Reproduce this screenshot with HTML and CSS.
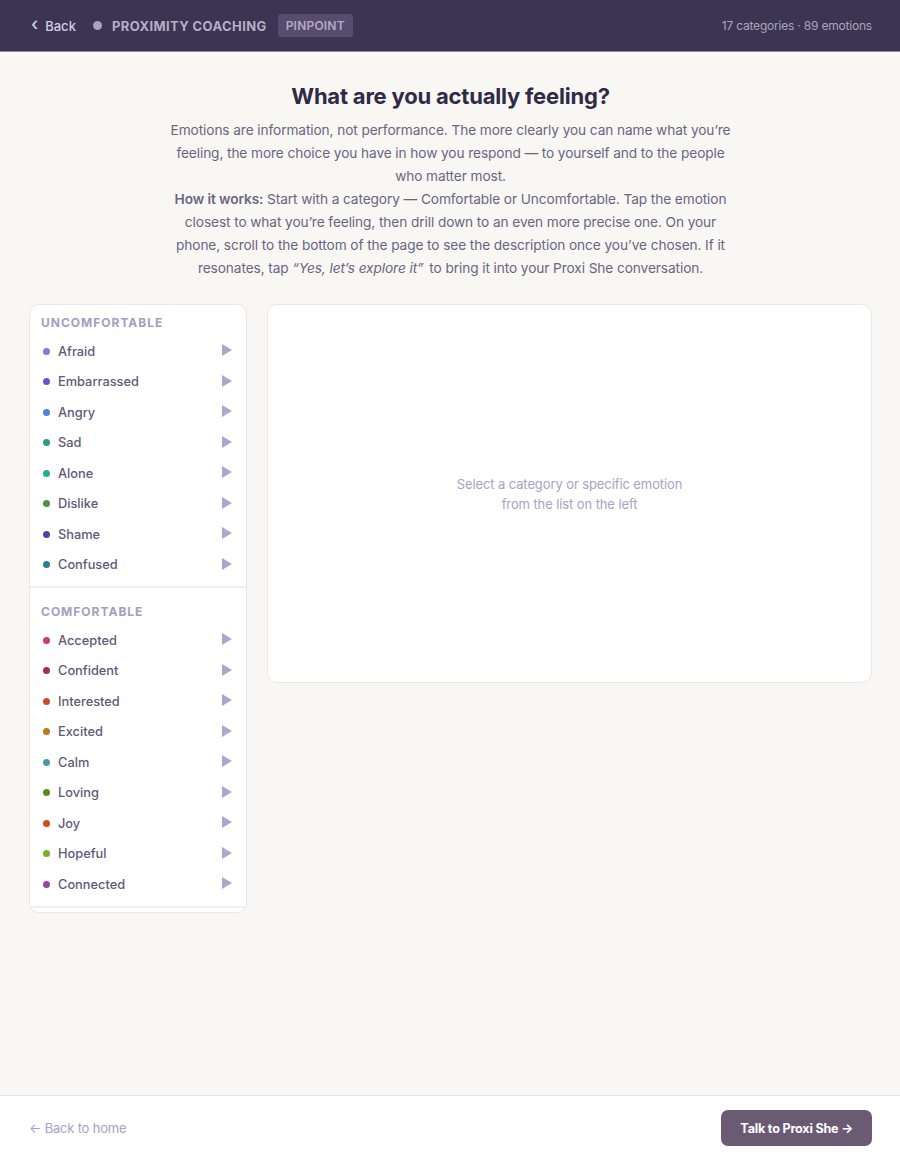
FILE: index.html
```html
<!DOCTYPE html>
<html lang="en">
<head>
    <meta charset="UTF-8">
    <meta name="viewport" content="width=device-width, initial-scale=1.0">
    <title>Pinpoint · Proximity Coaching</title>
    <link rel="stylesheet" href="styles.css">
</head>
<body>

    <header class="topbar">
        <div class="topbar-left">
            <a class="back" href="#"><span class="chev">&#8249;</span> Back</a>
            <span class="brand-dot"></span>
            <span class="brand">PROXIMITY COACHING</span>
            <span class="badge">PINPOINT</span>
        </div>
        <div class="stats">17 categories · 89 emotions</div>
    </header>

    <main class="main">
        <h1>What are you actually feeling?</h1>
        <p class="intro">Emotions are information, not performance. The more clearly you can name what you’re feeling, the more choice you have in how you respond — to yourself and to the people who matter most.</p>
        <p class="intro"><strong>How it works:</strong> Start with a category — Comfortable or Uncomfortable. Tap the emotion closest to what you’re feeling, then drill down to an even more precise one. On your phone, scroll to the bottom of the page to see the description once you’ve chosen. If it resonates, tap <em>“Yes, let’s explore it”</em> to bring it into your Proxi She conversation.</p>

        <div class="picker">
            <!-- lista de emociones -->
            <nav class="list">
                <div class="group">
                    <div class="group-title">UNCOMFORTABLE</div>
                    <div class="item"><span class="dot" style="background:#8c74e0"></span>Afraid<span class="arrow"></span></div>
                    <div class="item"><span class="dot" style="background:#6c52d4"></span>Embarrassed<span class="arrow"></span></div>
                    <div class="item"><span class="dot" style="background:#4a84dc"></span>Angry<span class="arrow"></span></div>
                    <div class="item"><span class="dot" style="background:#2e9a82"></span>Sad<span class="arrow"></span></div>
                    <div class="item"><span class="dot" style="background:#1fb092"></span>Alone<span class="arrow"></span></div>
                    <div class="item"><span class="dot" style="background:#4c9440"></span>Dislike<span class="arrow"></span></div>
                    <div class="item"><span class="dot" style="background:#4a46aa"></span>Shame<span class="arrow"></span></div>
                    <div class="item"><span class="dot" style="background:#26809c"></span>Confused<span class="arrow"></span></div>
                </div>
                <div class="group">
                    <div class="group-title">COMFORTABLE</div>
                    <div class="item"><span class="dot" style="background:#cc3a7a"></span>Accepted<span class="arrow"></span></div>
                    <div class="item"><span class="dot" style="background:#a42c5a"></span>Confident<span class="arrow"></span></div>
                    <div class="item"><span class="dot" style="background:#c84c30"></span>Interested<span class="arrow"></span></div>
                    <div class="item"><span class="dot" style="background:#bc7a1e"></span>Excited<span class="arrow"></span></div>
                    <div class="item"><span class="dot" style="background:#4a98a6"></span>Calm<span class="arrow"></span></div>
                    <div class="item"><span class="dot" style="background:#5e8a22"></span>Loving<span class="arrow"></span></div>
                    <div class="item"><span class="dot" style="background:#d8481a"></span>Joy<span class="arrow"></span></div>
                    <div class="item"><span class="dot" style="background:#78ae2a"></span>Hopeful<span class="arrow"></span></div>
                    <div class="item"><span class="dot" style="background:#9a44a8"></span>Connected<span class="arrow"></span></div>
                </div>
            </nav>

            <section class="detail">
                <p class="empty">Select a category or specific emotion<br>from the list on the left</p>
            </section>
        </div>
    </main>

    <footer class="footer">
        <a class="home" href="#">← Back to home</a>
        <button class="talk">Talk to Proxi She →</button>
    </footer>

</body>
</html>
```

FILE: styles.css
```css
* { box-sizing: border-box; }
body {
    margin: 0;
    min-height: 100vh;
    display: flex;
    flex-direction: column;
    font-family: Inter, "Noto Sans", sans-serif;
    background-color: #f8f7f4;
    color: #5e5878;
}
a { text-decoration: none; }

/* barra superior */
.topbar {
    height: 52px;
    background: #3b3453;
    border-bottom: 1px solid #8e88a4;
    display: flex;
    align-items: center;
    justify-content: space-between;
    padding: 0 28px 0 31px;
}
.topbar-left {
    display: flex;
    align-items: center;
}
.back {
    color: #d2cde0;
    font-size: 13px;
    font-weight: 500;
    display: flex;
    align-items: center;
    gap: 7px;
}
.chev {
    font-size: 18px;
    line-height: 1;
    margin-top: -3px;
}
.brand-dot {
    width: 9px;
    height: 9px;
    border-radius: 50%;
    background: #a9a3b8;
    margin: 0 10px 0 17px;
}
.brand {
    color: #b6aec6;
    font-size: 13px;
    font-weight: 700;
    letter-spacing: 0.4px;
}
.badge {
    margin-left: 11px;
    background: #564c6e;
    color: #b3aac4;
    font-size: 12px;
    font-weight: 600;
    letter-spacing: 0.2px;
    padding: 4px 8px;
    border-radius: 3px;
}
.stats {
    color: #aaa4ba;
    font-size: 12px;
    letter-spacing: -0.2px;
}

/* contenido */
.main {
    flex: 1;
    padding: 29px 28px 40px 29px;
    text-align: center;
}
h1 {
    margin: 0 0 8px;
    font-size: 22px;
    line-height: 30px;
    font-weight: 700;
    color: #2f2a46;
    letter-spacing: -0.2px;
}
.intro {
    margin: 0 auto;
    max-width: 566px;
    font-size: 13.7px;
    line-height: 23px;
    color: #6b6582;
    letter-spacing: -0.1px;
}
.intro strong { font-weight: 600; }
.intro em { padding-right: 2px; }

.picker {
    margin-top: 24px;
    display: grid;
    grid-template-columns: 218px 1fr;
    gap: 20px;
    align-items: start;
    text-align: left;
}
.list {
    background: #fff;
    border: 1px solid #e9e7ee;
    border-radius: 10px;
    padding-bottom: 4px;
}
.group {
    padding: 10px 0 6px;
    border-bottom: 2px solid #f1eff5;
}
.group + .group { padding-top: 16px; }
.group-title {
    padding: 0 11px;
    font-size: 12px;
    line-height: 16px;
    font-weight: 700;
    letter-spacing: 1px;
    color: #a59ec1;
    margin-bottom: 5px;
}
.item {
    height: 30.5px;
    display: flex;
    align-items: center;
    padding: 0 14px 0 13px;
    font-size: 12.8px;
    font-weight: 500;
    color: #5f5979;
}
.dot {
    width: 7px;
    height: 7px;
    border-radius: 50%;
    margin-right: 8px;
}
.arrow {
    margin-left: auto;
    width: 0;
    height: 0;
    border-top: 6px solid transparent;
    border-bottom: 6px solid transparent;
    border-left: 10px solid #aea6cf;
    margin-top: -2px;
}

.detail {
    height: 379px;
    background: #fff;
    border: 1px solid #e9e7ee;
    border-radius: 10px;
    display: flex;
    align-items: center;
    justify-content: center;
}
.empty {
    margin: 0;
    text-align: center;
    font-size: 13px;
    line-height: 20px;
    color: #a9a2c6;
    letter-spacing: -0.1px;
}

/* pie */
.footer {
    height: 65px;
    background: #fff;
    border-top: 1px solid #e5e3ea;
    display: flex;
    align-items: center;
    justify-content: space-between;
    padding: 0 28px 0 29px;
}
.home {
    color: #a9a1c8;
    font-size: 13px;
    letter-spacing: -0.2px;
}
.talk {
    height: 36px;
    padding: 0 19px;
    border: none;
    border-radius: 7px;
    background: #6b5a73;
    color: #fff;
    font-family: inherit;
    font-size: 12.6px;
    font-weight: 700;
    letter-spacing: -0.2px;
    cursor: pointer;
}
```
